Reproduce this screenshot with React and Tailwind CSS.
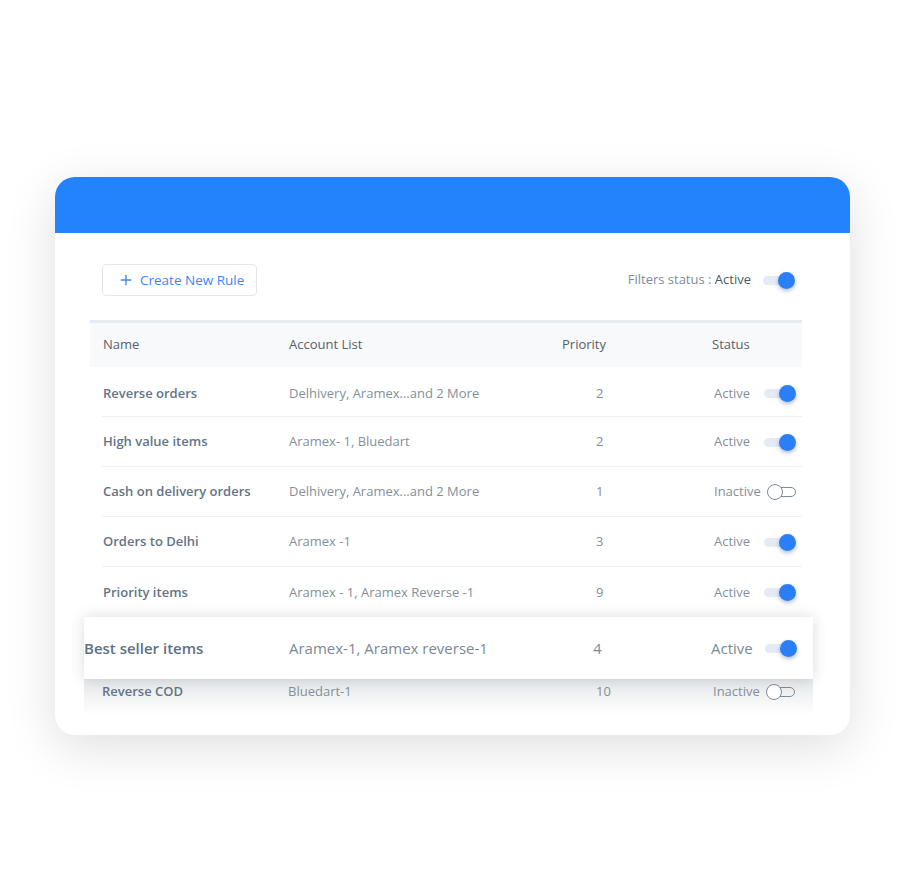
import { Plus } from "lucide-react";

const rules = [
  { name: "Reverse orders", accounts: "Delhivery, Aramex...and 2 More", priority: 2, active: true },
  { name: "High value items", accounts: "Aramex- 1, Bluedart", priority: 2, active: true },
  { name: "Cash on delivery orders", accounts: "Delhivery, Aramex...and 2 More", priority: 1, active: false },
  { name: "Orders to Delhi", accounts: "Aramex -1", priority: 3, active: true },
  { name: "Priority items", accounts: "Aramex - 1, Aramex Reverse -1", priority: 9, active: true },
];

const Toggle = ({ on }) => {
  if (on) {
    return (
      <div className="relative w-[32px] h-[17px] shrink-0">
        <div className="absolute left-0 right-[4px] top-[4px] h-[9px] rounded-full bg-[#e4ebf7]" />
        <div className="absolute right-0 top-0 w-[17px] h-[17px] rounded-full bg-[#2a7ff7] shadow-[0_2px_4px_rgba(30,60,120,0.35)]" />
      </div>
    );
  }
  return (
    <div className="relative w-[29px] h-[16px] shrink-0">
      <div className="absolute left-[8px] right-0 top-[3px] h-[10px] rounded-r-full border-[1.5px] border-[#7d8b98]" />
      <div className="absolute left-0 top-0 w-[16px] h-[16px] rounded-full border-[1.5px] border-[#7d8b98] bg-white" />
    </div>
  );
};

const App = () => {
  return (
    <div className="w-[898px] h-[886px] bg-white pt-[177px] pl-[55px] font-['Open_Sans',sans-serif]">
      <div className="w-[795px] h-[558px] rounded-[20px] bg-white shadow-[0_12px_50px_rgba(0,0,0,0.13)]">
        <div className="h-[56px] rounded-t-[20px] bg-[#2383fc]" />

        <div className="pt-[31px]">
          <div className="flex items-center justify-between pl-[47px] pr-[55px] h-[32px]">
            <button className="flex items-center h-[32px] w-[155px] pl-[15px] gap-[6px] rounded-[4px] border border-[#e3e7ec] bg-white text-[13.5px] text-[#3a86f7]">
              <Plus size={16} strokeWidth={2} />
              <span>Create New Rule</span>
            </button>
            <div className="flex items-center gap-[12px]">
              <span className="text-[13px] text-[#7f8b97]">
                Filters status : <span className="text-[#4d5864] font-medium">Active</span>
              </span>
              <Toggle on />
            </div>
          </div>

          <div className="mt-[24px] ml-[35px] w-[712px]">
            <div className="h-[47px] border-t-[3px] border-[#e6ebf4] bg-[#f8f9fa]">
              <div className="ml-[12px] h-full grid grid-cols-[186px_273px_150px_84px] items-center pl-[1px] text-[13px] text-[#56616c]">
                <span>Name</span>
                <span>Account List</span>
                <span>Priority</span>
                <span>Status</span>
              </div>
            </div>

            {rules.map((rule, index) => (
              <div
                key={index}
                className={`ml-[12px] h-[50px] grid grid-cols-[186px_273px_150px_84px] items-center pl-[1px] ${
                  index === 0 ? "pt-[4px]" : "pt-[1px]"
                } ${index < rules.length - 1 ? "border-b border-[#eef0f3]" : ""}`}
              >
                <span className="text-[13px] font-semibold text-[#637487]">{rule.name}</span>
                <span className="text-[13px] text-[#838f9b]">{rule.accounts}</span>
                <span className="pl-[34px] text-[13px] text-[#838f9b]">{rule.priority}</span>
                <div className="flex items-center">
                  <span className="text-[13px] text-[#838f9b] pl-[2px]">
                    {rule.active ? "Active" : "Inactive"}
                  </span>
                  <div className="ml-auto">
                    <Toggle on={rule.active} />
                  </div>
                </div>
              </div>
            ))}

            <div className="relative z-10 ml-[-6px] w-[729px] h-[62px] bg-white shadow-[0_0_14px_rgba(0,0,0,0.14)] grid grid-cols-[205px_272px_150px_86px] items-center">
              <span className="text-[15px] font-semibold text-[#607184]">Best seller items</span>
              <span className="text-[15px] text-[#7d8995]">Aramex-1, Aramex reverse-1</span>
              <span className="pl-[32px] text-[15px] text-[#7d8995]">4</span>
              <div className="flex items-center">
                <span className="text-[15px] text-[#7d8995]">Active</span>
                <div className="ml-auto">
                  <Toggle on />
                </div>
              </div>
            </div>

            <div className="ml-[-6px] w-[729px] h-[36px] bg-gradient-to-b from-[#e7e8ea] to-white">
              <div className="grid grid-cols-[186px_273px_150px_84px] pl-[18px] pt-[3px] items-center">
                <span className="text-[13px] font-semibold text-[#637487]">Reverse COD</span>
                <span className="text-[13px] text-[#838f9b]">Bluedart-1</span>
                <span className="pl-[35px] text-[13px] text-[#838f9b]">10</span>
                <div className="flex items-center">
                  <span className="text-[13px] text-[#838f9b] pl-[2px]">Inactive</span>
                  <div className="ml-auto">
                    <Toggle on={false} />
                  </div>
                </div>
              </div>
            </div>
          </div>
        </div>
      </div>
    </div>
  );
};

export default App;
